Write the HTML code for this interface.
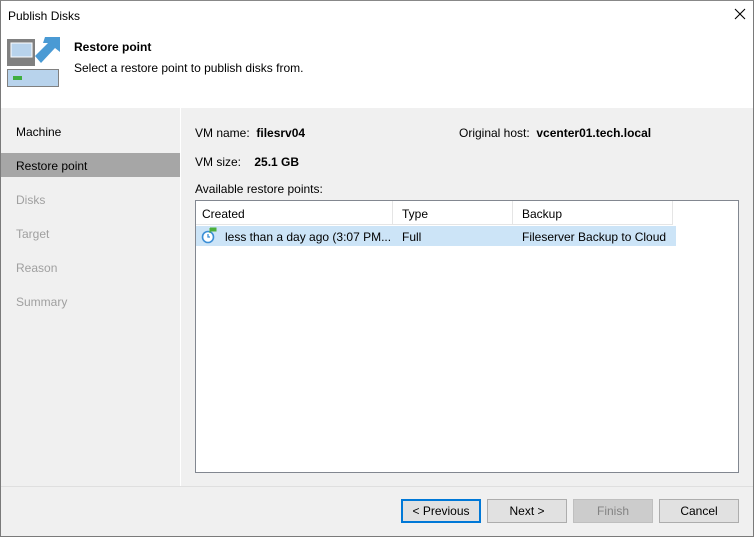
<!DOCTYPE html>
<html><head><style>
*{margin:0;padding:0;box-sizing:border-box}
body{width:754px;height:537px;overflow:hidden;font-family:"Segoe UI","Liberation Sans",sans-serif;font-size:12px;color:#000;background:#fff;position:relative}
.win{position:absolute;left:0;top:0;width:754px;height:537px;border:1px solid #7a7a7a;border-top-color:#888}
.abs{position:absolute;white-space:nowrap}
.t{margin-top:1px}
.nav{position:absolute;left:1px;top:108px;width:179px;height:378px;background:#f0f0f0}
.content{position:absolute;left:181px;top:108px;width:572px;height:378px;background:#f0f0f0}
.bottom{position:absolute;left:1px;top:486px;width:752px;height:50px;background:#f0f0f0}
.ni{position:absolute;left:15px;color:#a0a0a0;margin-top:1px}
.btn{position:absolute;top:499px;width:80px;height:24px;border:1px solid #adadad;background:#e1e1e1;text-align:center;line-height:23px}
</style></head><body>
<div class="abs t" style="left:8px;top:8px">Publish Disks</div>
<svg class="abs" style="left:734px;top:8px" width="12" height="12"><path d="M1 1L11 11M11 1L1 11" stroke="#000" stroke-width="1.1"/></svg>
<svg class="abs" style="left:6px;top:36px" width="55" height="52">
<rect x="1" y="3" width="28" height="27" fill="#808080"/>
<rect x="5" y="7" width="21" height="14" fill="#b8d3ec" stroke="#fff" stroke-width="1"/>
<path d="M29 20 L42 7 L37 7 L39 1 L54 1 L54 16 L49 12 L35 27 Z" fill="#4a9ad4"/>
<rect x="1.5" y="33.5" width="51" height="17" fill="#b8d3ec" stroke="#808080"/>
<rect x="7" y="40" width="9" height="4" fill="#3fae3f"/>
</svg>
<div class="abs t" style="left:74px;top:39px;font-weight:bold">Restore point</div>
<div class="abs t" style="left:74px;top:60px">Select a restore point to publish disks from.</div>
<div class="nav">
<div class="ni" style="top:16px;color:#000">Machine</div>
<div style="position:absolute;left:0;top:45px;width:179px;height:24px;background:#a6a6a6"></div>
<div class="ni" style="top:50px;color:#000">Restore point</div>
<div class="ni" style="top:84px">Disks</div>
<div class="ni" style="top:118px">Target</div>
<div class="ni" style="top:152px">Reason</div>
<div class="ni" style="top:186px">Summary</div>
</div>
<div class="content">
<div class="abs t" style="left:14px;top:17px">VM name:&nbsp; <b>filesrv04</b></div>
<div class="abs t" style="left:278px;top:17px">Original host:&nbsp; <b>vcenter01.tech.local</b></div>
<div class="abs t" style="left:14px;top:46px">VM size: &nbsp;&nbsp; <b>25.1 GB</b></div>
<div class="abs t" style="left:14px;top:73px">Available restore points:</div>
<div style="position:absolute;left:14px;top:92px;width:544px;height:273px;background:#fff;border:1px solid #828790">
<div style="position:absolute;left:0;top:0;width:477px;height:24px;border-bottom:1px solid #e5e5e5"></div>
<div style="position:absolute;left:196px;top:0;width:1px;height:24px;background:#e5e5e5"></div>
<div style="position:absolute;left:316px;top:0;width:1px;height:24px;background:#e5e5e5"></div>
<div style="position:absolute;left:476px;top:0;width:1px;height:24px;background:#e5e5e5"></div>
<div class="abs t" style="left:6px;top:5px">Created</div>
<div class="abs t" style="left:206px;top:5px">Type</div>
<div class="abs t" style="left:326px;top:5px">Backup</div>
<div style="position:absolute;left:0;top:25px;width:480px;height:20px;background:#cce4f7"></div>
<svg class="abs" style="left:5px;top:26px" width="18" height="18"><circle cx="7" cy="10" r="5.5" fill="#fff" stroke="#3a8ed6" stroke-width="1.6"/><path d="M7 7V10H9" stroke="#3a8ed6" stroke-width="1.3" fill="none"/><path d="M9 1V6M9 1H15V4H9" fill="#4caf3c" stroke="#4caf3c"/></svg>
<div class="abs t" style="left:29px;top:28px">less than a day ago (3:07 PM...</div>
<div class="abs t" style="left:206px;top:28px">Full</div>
<div class="abs t" style="left:326px;top:28px">Fileserver Backup to Cloud</div>
</div>
</div>
<div class="bottom" style="border-top:1px solid #dfdfdf"></div>
<div class="btn" style="left:401px;border:2px solid #0078d7;line-height:21px">&lt; Previous</div>
<div class="btn" style="left:487px">Next &gt;</div>
<div class="btn" style="left:573px;background:#cccccc;border-color:#bfbfbf;color:#838383">Finish</div>
<div class="btn" style="left:659px">Cancel</div>
<div class="win"></div>
</body></html>
